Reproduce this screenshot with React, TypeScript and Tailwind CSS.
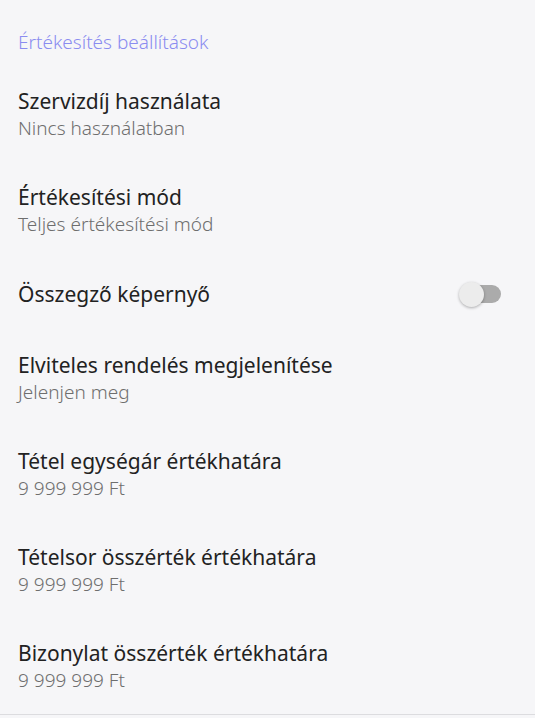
import React, { useState } from 'react';

type Setting = {
  title: string;
  subtitle?: string;
  toggle?: boolean;
};

const settings: Setting[] = [
  { title: 'Szervizdíj használata', subtitle: 'Nincs használatban' },
  { title: 'Értékesítési mód', subtitle: 'Teljes értékesítési mód' },
  { title: 'Összegző képernyő', toggle: true },
  { title: 'Elviteles rendelés megjelenítése', subtitle: 'Jelenjen meg' },
  { title: 'Tétel egységár értékhatára', subtitle: '9 999 999 Ft' },
  { title: 'Tételsor összérték értékhatára', subtitle: '9 999 999 Ft' },
  { title: 'Bizonylat összérték értékhatára', subtitle: '9 999 999 Ft' },
];

const Switch = ({ on, onChange }: { on: boolean; onChange: () => void }) => (
  <button onClick={onChange} className="relative flex h-[30px] w-[44px] items-center">
    <span
      className={`absolute right-[2px] h-[18px] w-[38px] rounded-full ${on ? 'bg-[#b3b4f5]' : 'bg-[#ababab]'}`}
    />
    <span
      className={`absolute h-[25px] w-[25px] rounded-full shadow-[0_1px_3px_rgba(0,0,0,0.3)] ${
        on ? 'right-0 bg-[#8a8cf0]' : 'left-0 bg-[#ececec]'
      }`}
    />
  </button>
);

const SettingRow = ({ item }: { item: Setting }) => {
  const [on, setOn] = useState(false);

  return (
    <div className="flex items-center justify-between px-[18px] py-[21px]">
      <div className="flex flex-col">
        <span className="text-[21px] leading-[28px] text-[#222222]">{item.title}</span>
        {item.subtitle && (
          <span className="text-[19px] leading-[26px] font-light text-[#6e6e6e]">{item.subtitle}</span>
        )}
      </div>
      {item.toggle && (
        <div className="mr-[14px]">
          <Switch on={on} onChange={() => setOn(!on)} />
        </div>
      )}
    </div>
  );
};

export default function App() {
  return (
    <div
      className="flex h-[718px] w-[535px] flex-col bg-[#f6f6f8]"
      style={{ fontFamily: '"Noto Sans", "Open Sans", sans-serif' }}
    >
      <div className="px-[18px] pt-[30px] pb-[12px] text-[19px] leading-[24px] font-light text-[#8a8cf0]">
        Értékesítés beállítások
      </div>
      <div className="flex flex-col border-b border-[#dcdcdf]">
        {settings.map((item) => (
          <SettingRow key={item.title} item={item} />
        ))}
      </div>
    </div>
  );
}
